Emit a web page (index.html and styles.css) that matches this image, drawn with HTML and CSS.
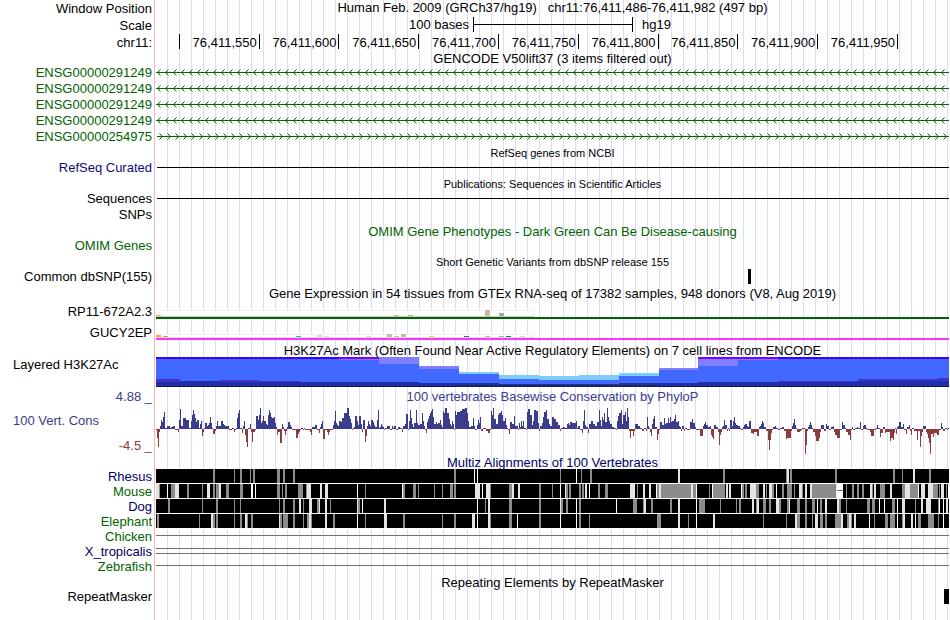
FILE: index.html
```html
<!DOCTYPE html>
<html lang="en">
<head>
<meta charset="utf-8">
<title>chr11:76,411,486-76,411,982</title>
<link rel="stylesheet" href="styles.css">
</head>
<body>
<svg class="defs" aria-hidden="true">
  <defs>
    <pattern id="reverse" width="8" height="16" patternUnits="userSpaceOnUse">
      <path d="M4.500 5.500L1.500 8.500L4.500 11.500" class="chevron"/>
    </pattern>
    <pattern id="forward" width="8" height="16" patternUnits="userSpaceOnUse">
      <path d="M3.500 5.500L6.500 8.500L3.500 11.500" class="chevron"/>
    </pattern>
  </defs>
</svg>
<main class="browser">
  <div class="row ruler"><span class="label">Window Position</span><div class="title">Human Feb. 2009 (GRCh37/hg19) &nbsp; chr11:76,411,486-76,411,982 (497 bp)</div></div>
  <div class="row ruler"><span class="label">Scale</span><div class="scale"><span class="scale-size">100 bases</span><span class="scale-bar"></span><span class="scale-db">hg19</span></div></div>
  <div class="row ruler"><span class="label">chr11:</span><div class="ticks"><span></span><span>76,411,550</span><span>76,411,600</span><span>76,411,650</span><span>76,411,700</span><span>76,411,750</span><span>76,411,800</span><span>76,411,850</span><span>76,411,900</span><span>76,411,950</span></div></div>

  <div class="row heading tight"><span class="label"></span><div class="title">GENCODE V50lift37 (3 items filtered out)</div></div>
  <div class="row gene"><span class="label">ENSG00000291249</span><svg class="plot"><rect width="100%" height="16" fill="url(#reverse)"/><rect y="8" width="100%" height="1"/></svg></div>
  <div class="row gene"><span class="label">ENSG00000291249</span><svg class="plot"><rect width="100%" height="16" fill="url(#reverse)"/><rect y="8" width="100%" height="1"/></svg></div>
  <div class="row gene"><span class="label">ENSG00000291249</span><svg class="plot"><rect width="100%" height="16" fill="url(#reverse)"/><rect y="8" width="100%" height="1"/></svg></div>
  <div class="row gene"><span class="label">ENSG00000291249</span><svg class="plot"><rect width="100%" height="16" fill="url(#reverse)"/><rect y="8" width="100%" height="1"/></svg></div>
  <div class="row gene"><span class="label">ENSG00000254975</span><svg class="plot"><rect width="100%" height="16" fill="url(#forward)"/><rect x="1" y="8" width="100%" height="1"/></svg></div>

  <div class="row heading small"><span class="label"></span><div class="title">RefSeq genes from NCBI</div></div>
  <div class="row item refseq"><span class="label">RefSeq Curated</span><svg class="plot"><rect x="1" y="7" width="100%" height="1" fill="#000"/></svg></div>
  <div class="row heading small"><span class="label"></span><div class="title">Publications: Sequences in Scientific Articles</div></div>
  <div class="row item"><span class="label">Sequences</span><svg class="plot"><rect x="1" y="7" width="100%" height="1"/></svg></div>
  <div class="row snps"><span class="label">SNPs</span></div>
  <div class="row heading green"><span class="label"></span><div class="title">OMIM Gene Phenotypes - Dark Green Can Be Disease-causing</div></div>
  <div class="row item green"><span class="label">OMIM Genes</span></div>
  <div class="row heading small"><span class="label"></span><div class="title">Short Genetic Variants from dbSNP release 155</div></div>
  <div class="row item"><span class="label">Common dbSNP(155)</span><svg class="plot" viewBox="0 0 793 15" preserveAspectRatio="none"><rect x="592" width="3" height="15"/></svg></div>

  <div class="row heading"><span class="label"></span><div class="title">Gene Expression in 54 tissues from GTEx RNA-seq of 17382 samples, 948 donors (V8, Aug 2019)</div></div>
  <div class="row expression"><span class="label">RP11-672A2.3</span>
    <svg class="plot" viewBox="0 0 793 21" preserveAspectRatio="none">
      <rect y="10" width="378" height="7" fill="#f0f0f0"/><rect y="11" width="377" height="5" fill="#fff"/><rect y="16" width="378" height="1" fill="#ccc"/>
      <rect y="15" width="5" height="1" fill="#ffa54f"/><rect x="238" y="15" width="5" height="1" fill="#cdb79e"/><rect x="252" y="15" width="5" height="1" fill="#9acd32"/><rect x="329" y="10" width="5" height="6" fill="#cdb79e"/><rect x="343" y="13" width="5" height="3" fill="#a6a6a6"/>
      <rect y="17" width="793" height="2" fill="#006400"/>
    </svg></div>
  <div class="row expression"><span class="label">GUCY2EP</span>
    <svg class="plot" viewBox="0 0 793 21" preserveAspectRatio="none">
      <rect y="13" width="378" height="4" fill="#f0f0f0"/><rect y="14" width="377" height="2" fill="#fff"/><rect y="16" width="378" height="1" fill="#ddd"/>
      <rect y="14" width="5" height="2" fill="#ffa54f"/><rect x="7" y="15" width="5" height="1" fill="#ee9a00"/><rect x="140" y="15" width="5" height="1" fill="#00cdcd"/>
      <rect x="161" y="14" width="5" height="2" fill="#eed5d2"/><rect x="168" y="15" width="5" height="1" fill="#eed5d2"/><rect x="210" y="15" width="5" height="1" fill="#eed5d2"/>
      <rect x="231" y="13" width="5" height="3" fill="#cdb79e"/><rect x="238" y="15" width="5" height="1" fill="#cdb79e"/><rect x="245" y="13" width="5" height="3" fill="#cdb79e"/>
      <rect x="273" y="15" width="5" height="1" fill="#ffd700"/><rect x="308" y="15" width="5" height="1" fill="#3a5fcd"/><rect x="329" y="15" width="5" height="1" fill="#cdb79e"/><rect x="343" y="15" width="5" height="1" fill="#a6a6a6"/><rect x="350" y="15" width="5" height="1" fill="#008b45"/><rect x="364" y="15" width="5" height="1" fill="#eed5d2"/>
      <rect y="17" width="793" height="2" fill="#ff33ff"/>
    </svg></div>

  <div class="row heading short"><span class="label"></span><div class="title">H3K27Ac Mark (Often Found Near Active Regulatory Elements) on 7 cell lines from ENCODE</div></div>
  <div class="row histone"><span class="label start">Layered H3K27Ac</span>
    <svg class="plot" viewBox="0 0 793 30" preserveAspectRatio="none">
      <path fill="#7dceff" d="M303 30V15H343V18H383V19H423V18H463V16H503V30z"/>
      <path fill="#8080ff" d="M183 30V2H223V0H263V9H303V30zM503 30V11H542V2H622V30z"/>
      <path fill="#4169ff" d="M0 30V2H183V3H223V7H263V12H303V17H343V22H383V23H463V19H503V13H542V9H582V3H622V2H793V30z"/>
      <path fill="#4000ff" d="M0 0H183V2H0zM622 0H793V2H622z"/>
      <path fill="#7f00ff" d="M183 0H223V2H183zM542 0H622V2H542z"/>
      <path fill="#4033cc" d="M0 30V22H24V24H64V23H104V24H144V25H183V30zM582 30V25H622V24H702V22H782V21H793V30z"/>
      <path fill="#1f2fa8" d="M0 30V25H24V24H64V25H263V26H343V27H463V26H542V25H702V24H793V30z"/>
      <rect y="29" width="793" height="1" fill="#16164a"/><rect x="303" y="28" width="200" height="2" fill="#16265a"/>
    </svg></div>

  <div class="row heading indigo"><span class="label">4.88 _</span><div class="title">100 vertebrates Basewise Conservation by PhyloP</div></div>
  <div class="row conservation indigo"><span class="label stack"><span>100 Vert. Cons</span><span class="minimum">-4.5 _</span></span><svg class="plot" id="phylop" viewBox="0 0 2379 52" preserveAspectRatio="none"></svg></div>

  <div class="row heading multiz navy"><span class="label"></span><div class="title">Multiz Alignments of 100 Vertebrates</div></div>
  <div class="row item navy"><span class="label">Rhesus</span><svg class="plot" data-species="rhesus" viewBox="0 0 2379 15" preserveAspectRatio="none"></svg></div>
  <div class="row item green"><span class="label">Mouse</span><svg class="plot" data-species="mouse" viewBox="0 0 2379 15" preserveAspectRatio="none"></svg></div>
  <div class="row item navy"><span class="label">Dog</span><svg class="plot" data-species="dog" viewBox="0 0 2379 15" preserveAspectRatio="none"></svg></div>
  <div class="row item green"><span class="label">Elephant</span><svg class="plot" data-species="elephant" viewBox="0 0 2379 15" preserveAspectRatio="none"></svg></div>
  <div class="row item green"><span class="label">Chicken</span><svg class="plot gap"><rect y="6" width="100%" height="1"/></svg></div>
  <div class="row item navy"><span class="label">X_tropicalis</span><svg class="plot gap"><rect y="4" width="100%" height="1"/><rect y="9" width="100%" height="1"/></svg></div>
  <div class="row item green"><span class="label">Zebrafish</span><svg class="plot gap"><rect y="6" width="100%" height="1"/></svg></div>

  <div class="row heading short"><span class="label"></span><div class="title">Repeating Elements by RepeatMasker</div></div>
  <div class="row item"><span class="label">RepeatMasker</span><svg class="plot" viewBox="0 0 793 15" preserveAspectRatio="none"><rect x="788" width="5" height="15"/></svg></div>
</main>
<script src="tracks.js"></script>
</body>
</html>
```
FILE: styles.css
```css
body {
  margin: 0;
  background: #fff;
  color: #000;
  font: 13px/15px "Liberation Sans", Arial, sans-serif;
}

.defs {
  position: absolute;
  width: 0;
  height: 0;
}

/* Red divider between labels and tracks, then the guide lines. */
.browser {
  box-sizing: border-box;
  min-height: 100vh;
  padding-right: 1px;
  background:
    linear-gradient(#ffb4b4, #ffb4b4) 154px 0 / 1px 100% no-repeat,
    repeating-linear-gradient(90deg, #dcdcf8 0 1px, transparent 1px 12px) 167px 0 no-repeat;
}

.row {
  display: grid;
  grid-template-columns: 152px minmax(0, 1fr);
  grid-template-rows: 100%;
  column-gap: 4px;
  height: 15px;
  line-height: 15px;
  white-space: nowrap;
}

.label {
  text-align: right;
}

.label.start {
  text-align: left;
  padding-left: 13px;
}

.title {
  text-align: center;
}

.plot {
  display: block;
  width: 100%;
  height: 100%;
  shape-rendering: crispEdges;
}

.ruler {
  height: 17px;
  line-height: 17px;
}

.ruler .title,
.scale {
  line-height: 15px;
}

.heading {
  height: 16px;
  line-height: 19px;
}

.heading.tight {
  height: 13px;
  line-height: 15px;
}

.heading.short {
  height: 15px;
  line-height: 17px;
}

.heading.multiz {
  height: 14px;
  line-height: 15px;
}

.heading.small {
  font-size: 11px;
}

.snps {
  height: 16px;
  line-height: 17px;
}

.gene {
  height: 16px;
  line-height: 17px;
  color: #006400;
  fill: #006400;
}

.chevron {
  fill: none;
  stroke: #006400;
  stroke-width: 1;
  shape-rendering: auto;
}

.expression {
  height: 21px;
  line-height: 23px;
}

.histone {
  height: 30px;
}

.conservation {
  height: 52px;
}

.stack {
  display: flex;
  flex-direction: column;
  gap: 10px;
  padding: 10px 0 0 13px;
  text-align: left;
}

.minimum {
  text-align: right;
  color: #8c3c3c;
}

.green { color: #006400; }
.navy { color: #000064; }
.refseq { color: #0c0c78; }
.indigo { color: #3c3c8c; }
.gap { fill: #707070; }

.scale {
  display: grid;
  grid-template-columns: 317fr 160fr 316fr;
}

.scale-size {
  text-align: right;
  padding-right: 4px;
}

.scale-db {
  padding-left: 9px;
}

.scale-bar {
  box-sizing: border-box;
  height: 15px;
  border: solid #000;
  border-width: 0 1px;
  background: linear-gradient(#000, #000) 0 7px / 100% 1px no-repeat;
}

.ticks {
  display: grid;
  grid-template-columns: 15fr repeat(9, 50fr) 32fr;
}

.ticks span {
  box-sizing: border-box;
  min-width: 0;
  height: 15px;
  padding-right: 2px;
  border-right: 1px solid #000;
  text-align: right;
}
```
FILE: tracks.js
```js
// Horizontal positions are in thirds of a guide unit; each chunk has its own origin.
const ORIGINS = [-18, 762, 1572];

// Conservation score as "position:score", held until the next position.
const PHYLOP = [
  "18:-1 21:-9 24:-18 27:-3 30:3 33:9 36:7 39:12 42:17 45:1 51:3 60:1 63:2 69:3 75:-1 84:-3 87:9 90:20 93:3 99:11 108:9 117:1 123:8 126:14 129:19 132:15 135:11 138:7 141:9 147:1 150:5 153:8 156:-7 159:-3 162:1 165:6 171:3 174:4 177:6 180:12 183:6 186:1 189:-5 195:-2 198:3 201:8 204:3 213:8 219:5 222:4 225:3 237:-1 246:1 252:-3 255:-1 258:1 261:11 264:16 267:19 270:1 276:-4 279:3 282:8 285:-6 288:-13 291:-18 294:1 300:5 303:-3 306:-13 309:-3 315:-1 318:13 324:9 327:14 330:21 333:6 336:8 339:13 342:8 348:5 351:4 354:14 357:19 360:16 363:12 366:11 372:12 375:6 378:2 381:-6 384:-3 390:-14 396:5 399:2 402:-2 405:-6 408:-2 411:2 414:7 420:4 423:2 426:-1 438:-9 444:-5 447:-3 450:-1 453:1 459:-1 462:1 465:-1 480:-3 483:-6 486:2 495:4 501:-1 507:-4 510:2 513:5 516:8 519:-10 525:-1 531:-3 534:-6 537:-3 540:-1 549:4 552:8 555:18 558:6 561:4 564:3 567:8 573:7 576:11 582:16 591:21 597:13 600:10 603:6 606:-1 609:1 612:2 615:13 621:8 624:4 627:13 633:5 636:-3 639:9 645:-13 648:-7 651:3 654:8 657:5 660:3 663:9 669:7 672:4 675:2 681:9 684:19 687:1 690:2 693:5 696:3 699:2 702:-1 705:1 711:3 720:-1 726:3 729:1 732:3 738:-1 744:2 750:1 756:-3 759:3 765:5 768:15 774:-1 777:8 780:19 783:11 786:5 789:2 792:6 798:19 801:6 804:4",
  "24:4 30:5 36:16 39:8 42:3 45:-1 48:-4 51:7 54:10 57:13 60:16 63:18 66:20 69:12 72:5 78:7 81:5 84:6 90:9 93:4 96:2 99:18 102:16 105:21 111:16 117:10 120:5 123:3 126:8 129:5 132:-1 135:18 138:14 141:17 150:18 156:20 165:21 171:16 174:8 177:2 183:3 189:11 192:3 195:-1 201:4 204:9 207:6 210:12 213:-2 219:1 228:-2 234:-4 240:-1 243:18 246:14 249:21 252:10 258:5 264:14 267:16 273:18 276:14 279:8 285:11 288:4 291:1 294:-1 297:-5 300:7 306:5 312:13 315:3 324:-1 327:6 330:2 333:8 336:3 339:8 342:1 348:-1 351:17 354:20 360:14 366:4 369:8 372:19 378:18 384:6 387:-2 390:3 396:6 399:12 402:17 408:19 411:10 417:5 420:3 426:12 432:10 438:7 444:4 450:-2 453:1 459:2 465:1 471:5 474:6 477:4 480:7 486:6 498:8 501:1 504:3 510:-1 516:-4 519:8 522:19 525:4 528:2 534:-4 537:5 543:8 549:5 555:3 561:7 567:19 570:9 573:3 576:12 579:9 582:16 585:7 591:21 594:12 597:8 600:5 606:2 612:1 618:-1 621:8 624:13 627:16 633:19 636:5 639:14 645:17 648:8 651:21 654:12 657:-2 660:-9 663:-2 669:-7 672:-2 675:5 684:3 690:1 696:-2 702:1 708:-2 711:12 714:3 717:1 720:-3 723:-7 726:5 729:10 732:13 735:2 741:-11 744:-5 747:-1 750:7 756:4 762:11 765:5 768:6 774:11 777:6 780:12 783:7 786:8 792:10 795:14 798:7 804:8 807:3",
  "0:2 3:-2 6:3 12:-2 15:1 21:-1 30:7 36:10 39:6 45:2 48:-1 60:-7 69:3 72:5 75:7 78:4 84:2 90:3 93:-6 96:-8 99:-10 102:4 108:2 114:-3 117:-16 120:-6 123:-3 126:2 129:3 132:9 135:4 141:-2 144:1 147:-2 150:9 156:3 159:8 162:12 165:6 168:4 174:3 180:1 183:-1 189:2 192:4 195:5 201:3 204:2 207:8 213:-4 219:-5 222:-3 231:-7 237:2 240:3 243:5 246:8 249:6 252:2 258:-2 264:-11 267:-21 270:-11 273:-4 276:-1 279:2 285:3 288:1 294:-1 300:1 306:2 312:-2 318:-10 321:-9 333:-2 336:3 339:6 342:10 345:4 348:1 351:-3 360:-2 363:-1 366:1 375:-25 378:-16 381:-2 384:2 387:4 390:7 393:4 396:1 399:-3 405:-7 408:-12 417:-9 420:-3 423:4 432:-2 438:5 441:3 447:-1 453:2 459:3 462:-3 465:-6 471:-9 480:-1 486:7 489:4 495:1 498:-3 504:-6 510:-11 513:-1 516:2 519:-1 525:1 531:2 534:1 540:7 543:-1 549:3 552:4 558:1 561:-1 570:-3 573:-7 582:-1 588:1 591:4 594:1 600:-8 603:-4 609:2 615:-4 618:-3 624:-3 630:-12 633:-9 639:-11 642:-4 645:1 648:-5 651:2 654:3 657:7 663:2 669:5 672:-1 678:-5 681:2 687:4 690:-2 693:-6 696:1 702:-2 711:-11 714:-2 720:-18 723:-7 726:-3 729:3 738:-3 741:-5 744:-9 747:-14 750:-25 753:-5 759:-8 762:-4 771:-6 777:-1 783:6 786:2 789:-2 795:1 801:-1 804:1 807:0"
];

// Stripes as "position width shade": g identical in part, l low, w none.
const STRIPES = {
  rhesus: [
    "189 6g,252 3g,270 6g,300 3g,309 6g,381 9g,399 6g,429 6g",
    "132 6g,192 3w,201 3w,450 3g,498 3w,513 3g,540 6g,804 6l",
    "129 6g,318 3g,321 6l,330 6g,465 6g,639 6g,666 3g,699 6l,747 6g"
  ],
  mouse: [
    "18 9l,27 3g,51 3w,63 12g,75 12l,111 6g,156 3g,171 9l,189 6g,198 9g,207 6l,228 9g,270 9g,303 6w,315 3w,381 9g,396 3g,405 6g,444 15g,468 3g,471 12l,510 6l,525 9l,621 3w,645 3g,756 3w,759 6g,789 9g,804 3g",
    "9 9g,24 3g,72 3g,96 3g,120 9g,132 6g,195 15l,216 3w,228 12l,240 3g,297 9g,306 6l,324 6l,387 6g,426 3g,450 3w,465 3l,468 6g,477 6g,507 6g,516 6g,525 6l,537 3w,564 6g,585 9g,660 15l,681 3g,699 6l,717 6l,738 3w,741 6g,747 6l,753 57g",
    "0 33g,33 6l,39 9g,48 3w,87 3g,96 3w,99 36g,138 6l,147 6l,183 3w,186 6g,195 6g,210 18l,228 9g,249 6l,258 3g,267 9l,276 6g,288 3w,306 6g,321 15g,342 3g,357 9l,366 3g,375 6l,390 6l,396 72g,468 3l,471 18w,498 3g,516 6g,531 6g,546 6g,570 6l,576 3g,582 6l,600 15g,630 6l,666 9g,675 15l,690 24g,714 3w,723 12l,744 15l,759 15g,777 3g,783 9l,798 3g,804 3w"
  ],
  dog: [
    "54 6g,156 3g,198 6g,252 3g,270 3g,387 3g,399 6g,429 6g,447 6l,459 3g,477 9l,501 6g,507 3l,525 6l,540 3g,621 3l,624 6g,636 3w,702 6l",
    "201 3w,225 3g,234 6l,297 9g,387 6g,450 3l,453 6g,468 6g,498 3w,507 6g,618 3w,669 12g,699 3g,702 6l,723 6g,780 6g,804 6l",
    "48 3w,57 18g,120 3g,168 3g,177 6g,216 6l,228 3g,231 6l,249 9g,267 6g,288 9l,297 6g,321 9g,327 3l,351 9g,375 6g,396 9g,411 3w,420 6g,435 6l,471 6l,477 6g,498 3g,561 9g,576 9g,597 3w,612 3w,636 9g,651 3w,666 9l,705 3g,723 6l,738 15l,774 3g,777 3w,789 3w,798 6l"
  ],
  elephant: [
    "21 6g,147 3g,183 6l,189 6g,198 6g,252 3g,270 6g,285 6l,291 3g,303 6g,387 3l,390 6g,399 15g,429 6g,459 3g,471 6g,477 6l,483 3g,525 6l,549 6g,621 3w,645 3g,702 9l,759 6g",
    "96 3g,132 6g,186 9l,201 3w,234 6l,240 3g,297 9g,321 3w,387 6g,450 3w,498 3w,507 6g,537 3g,741 12g,804 6l",
    "24 3g,48 3w,99 6l,249 3g,318 3g,345 6l,351 9g,375 6g,396 3g,405 9l,420 9g,435 6g,465 18g,483 6l,501 6g,507 6l,513 3g,522 6l,567 3w,582 3g,615 9g,630 15g,651 3w,666 3g,669 6l,693 6l,705 3w,714 9g,744 18g,774 3g,789 3w"
  ]
};

const SHADES = { g: "#8c8c8c", l: "#e4e4e4", w: "#ffffff" };
const WIDTH = 2379;

function addRect(svg, x, y, width, height, fill) {
  const rect = document.createElementNS("http://www.w3.org/2000/svg", "rect");
  Object.entries({ x, y, width, height, fill }).forEach(([k, v]) => rect.setAttribute(k, v));
  svg.append(rect);
}

const phylop = document.getElementById("phylop");
const points = PHYLOP.flatMap((chunk, i) =>
  chunk.split(" ").map(p => {
    const [x, score] = p.split(":").map(Number);
    return [x + ORIGINS[i], score];
  })
);
points.forEach(([x, score], i) => {
  const end = i + 1 < points.length ? points[i + 1][0] : WIDTH;
  if (score > 0) addRect(phylop, x, 26 - score, end - x, score, "#3c3c8c");
  if (score < 0) addRect(phylop, x, 26, end - x, -score, "#8c3c3c");
  if (score <= -25) addRect(phylop, x, 49, end - x, 2, "#ff00ff");
});

document.querySelectorAll("[data-species]").forEach(svg => {
  const species = svg.dataset.species;
  addRect(svg, 0, 0, WIDTH, 15, "#ffffff");
  addRect(svg, 0, 0, WIDTH, 14, "#000000");
  STRIPES[species].forEach((chunk, i) => {
    chunk.split(",").forEach(s => {
      const [x, rest] = s.split(" ");
      addRect(svg, Number(x) + ORIGINS[i], 0, parseInt(rest, 10), 14, SHADES[rest.slice(-1)]);
    });
  });
  if (species === "mouse") addRect(svg, 2043, 6, 18, 1, "#707070");
});
```
